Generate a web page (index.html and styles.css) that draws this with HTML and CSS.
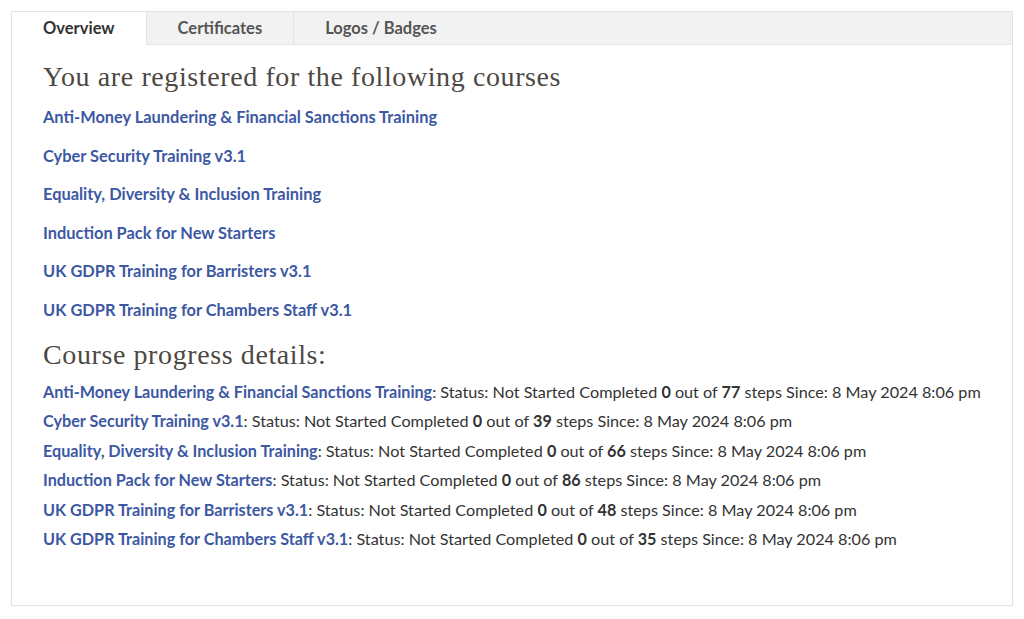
FILE: index.html
```html
<!DOCTYPE html>
<html lang="en">
<head>
    <meta charset="UTF-8">
    <title>My Courses</title>
    <link rel="stylesheet" href="styles.css">
</head>
<body>
    <div class="panel">
        <div class="tabs">
            <div class="tab active">Overview</div>
            <div class="tab">Certificates</div>
            <div class="tab">Logos / Badges</div>
        </div>
        <div class="content">
            <h2 class="courses-title">You are registered for the following courses</h2>
            <ul class="course-list">
                <li><a href="#">Anti-Money Laundering &amp; Financial Sanctions Training</a></li>
                <li><a href="#">Cyber Security Training v3.1</a></li>
                <li><a href="#">Equality, Diversity &amp; Inclusion Training</a></li>
                <li><a href="#">Induction Pack for New Starters</a></li>
                <li><a href="#">UK GDPR Training for Barristers v3.1</a></li>
                <li><a href="#">UK GDPR Training for Chambers Staff v3.1</a></li>
            </ul>

            <h2 class="progress-title">Course progress details:</h2>
            <ul class="progress-list">
                <li><a href="#">Anti-Money Laundering &amp; Financial Sanctions Training</a>: Status: Not Started Completed <b>0</b> out of <b>77</b> steps Since: 8 May 2024 8:06 pm</li>
                <li><a href="#">Cyber Security Training v3.1</a>: Status: Not Started Completed <b>0</b> out of <b>39</b> steps Since: 8 May 2024 8:06 pm</li>
                <li><a href="#">Equality, Diversity &amp; Inclusion Training</a>: Status: Not Started Completed <b>0</b> out of <b>66</b> steps Since: 8 May 2024 8:06 pm</li>
                <li><a href="#">Induction Pack for New Starters</a>: Status: Not Started Completed <b>0</b> out of <b>86</b> steps Since: 8 May 2024 8:06 pm</li>
                <li><a href="#">UK GDPR Training for Barristers v3.1</a>: Status: Not Started Completed <b>0</b> out of <b>48</b> steps Since: 8 May 2024 8:06 pm</li>
                <li><a href="#">UK GDPR Training for Chambers Staff v3.1</a>: Status: Not Started Completed <b>0</b> out of <b>35</b> steps Since: 8 May 2024 8:06 pm</li>
            </ul>
        </div>
    </div>
</body>
</html>
```

FILE: styles.css
```css
body {
    font-family: Lato, "Liberation Sans", sans-serif;
    margin: 0;
    padding: 11px;
    background-color: #fff;
    color: #333;
}
.panel {
    border: 1px solid #e2e2e2;
    height: 593px;
}
.tabs {
    display: flex;
    background-color: #f2f2f2;
    border-bottom: 1px solid #e6e6e6;
    height: 32px;
}
.tab {
    font-size: 16.5px;
    font-weight: bold;
    color: #555;
    line-height: 32px;
    padding: 0 31px;
    border-right: 1px solid #e2e2e2;
}
.tab:last-child {
    border-right: none;
}
.tab.active {
    background-color: #fff;
    color: #333;
    height: 33px;
}
.content {
    padding: 16px 31px;
}
h2 {
    font-family: "Liberation Serif", serif;
    font-weight: normal;
    font-size: 28px;
    letter-spacing: 0.6px;
    color: #4d4843;
    margin: 0 0 14px;
    line-height: 32px;
}
.progress-title {
    margin-bottom: 11px;
}
ul {
    list-style: none;
    margin: 0;
    padding: 0;
}
a {
    color: #3d58a3;
    font-weight: bold;
    text-decoration: none;
}
.course-list {
    margin-bottom: 8px;
}
.course-list li {
    font-size: 16.4px;
    line-height: 20px;
    margin-bottom: 18.6px;
}
.progress-list li {
    font-size: 16.2px;
    line-height: 20px;
    margin-bottom: 9.5px;
}
.progress-list b {
    color: #333;
}
```
